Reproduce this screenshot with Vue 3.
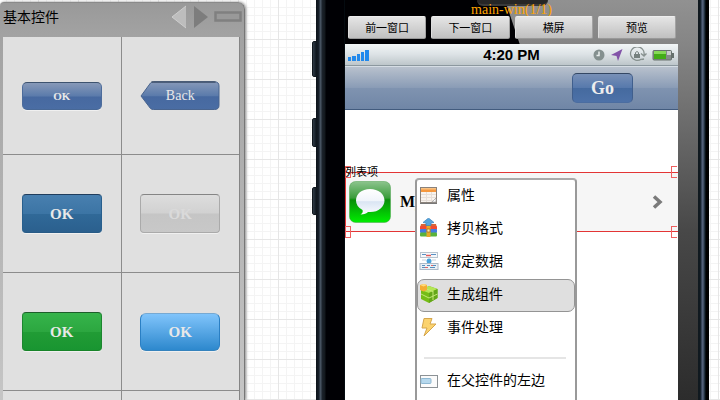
<script setup>
import { ref } from 'vue'

const tiles = [
  { label: 'OK', kind: 'navy' },
  { label: 'Back', kind: 'back' },
  { label: 'OK', kind: 'steel' },
  { label: 'OK', kind: 'muted' },
  { label: 'OK', kind: 'green' },
  { label: 'OK', kind: 'sky' },
  { label: '', kind: '' },
  { label: '', kind: '' }
]
const tools = ['前一窗口', '下一窗口', '横屏', '预览']
const menu = [
  { label: '属性', icon: 'sheet' },
  { label: '拷贝格式', icon: 'copy' },
  { label: '绑定数据', icon: 'bind' },
  { label: '生成组件', icon: 'cube' },
  { label: '事件处理', icon: 'bolt' },
  { label: '在父控件的左边', icon: 'left', split: true }
]
const active = ref('生成组件')
</script>

<template>
  <div class="workspace">
    <aside class="palette">
      <header class="palette-head">
        <h2>基本控件</h2>
        <button class="plain" aria-label="上一页">
          <svg width="16" height="24" viewBox="0 0 16 24"><path d="M1 12 15 1V23Z" fill="#bdbdbd" /><path d="M15 1 1 12 15 23" fill="none" stroke="#cecece" /></svg>
        </button>
        <button class="plain next" aria-label="下一页">
          <svg width="16" height="24" viewBox="0 0 16 24"><path d="M15 12 1 1V23Z" fill="#7d7d7d" /></svg>
        </button>
        <button class="plain" aria-label="折叠">
          <svg width="28" height="24" viewBox="0 0 28 24"><rect x="1.500" y="7.500" width="25" height="8" fill="#999" stroke="#808080" stroke-width="2.500" /></svg>
        </button>
      </header>
      <div class="tiles">
        <div v-for="(tile, i) in tiles" :key="i" class="tile">
          <button v-if="tile.kind" class="sample" :class="tile.kind">
            <svg v-if="tile.kind === 'back'" class="arrow" width="80" height="30" viewBox="0 0 79 30">
              <defs>
                <linearGradient id="arrowFill" x2="0" y2="1">
                  <stop offset="0" stop-color="#8799b9" /><stop offset=".5" stop-color="#5b7bab" />
                  <stop offset=".54" stop-color="#4769a0" /><stop offset="1" stop-color="#4a6da4" />
                </linearGradient>
              </defs>
              <path d="M.5 15 10 2Q11 .8 13 .8H74Q78.500.8 78.500 5V24.500Q78.500 28.500 74 28.500H13Q11 28.500 10 27.500Z" fill="url(#arrowFill)" stroke="#49648e" />
              <path d="M11 1H75" stroke="#26344a" />
            </svg>
            <span>{{ tile.label }}</span>
          </button>
        </div>
      </div>
    </aside>

    <main class="stage">
      <div class="phone">
        <i class="side-key mute"></i>
        <i class="side-key up"></i>
        <i class="side-key down"></i>
        <i class="speaker"></i>
        <div class="title">main-win(1/1)</div>
        <div class="tools">
          <button v-for="t in tools" :key="t">{{ t }}</button>
        </div>

        <div class="screen">
          <div class="status">
            <svg width="21" height="12" viewBox="0 0 21 12" fill="#2189ec"><path d="M0 8h3v4H0zM4 7h4v5H4zM9 5h3v7H9zM13 3h3v9h-3zM17 1h4v11h-4z" /></svg>
            <time>4:20 PM</time>
            <svg class="status-icons" width="82" height="16" viewBox="0 0 82 16">
              <circle cx="6" cy="8" r="5.500" fill="#84908f" /><path d="M6 4.500V8.500H3.500" fill="none" stroke="#e8eded" stroke-width="1.500" />
              <path d="M29.500 2 18 8l5.500 1L25 14Z" fill="#8253a8" />
              <path d="M48.500 12A6.800 6.800 0 1 1 51 8M48 6.500 51 9l2.500-2.500M48.500 12.500 51 12" fill="none" stroke="#87918f" stroke-width="1.300" />
              <rect x="41" y="7" width="6" height="4" fill="#75807e" /><path d="M42.500 7V5.500q1.500-2 3 0V7" fill="none" stroke="#75807e" />
              <rect x="60" y="3.500" width="18.500" height="9.500" rx="1" fill="#858a89" stroke="#66706c" />
              <path d="M79 6h2v5h-2z" fill="#66706c" /><path d="M61 4h12v8H61z" fill="#43ac16" /><path d="M61 4h12v3H61z" fill="#86d957" /><path d="M74 4h4v4h-4z" fill="#c9cdcc" />
            </svg>
          </div>
          <nav class="navbar"><button class="go">Go</button></nav>
          <section class="row">
            <span class="row-tag">列表项</span>
            <i class="handle tl"></i><i class="handle tr"></i><i class="handle bl"></i><i class="handle br"></i>
            <svg width="42" height="42" viewBox="0 0 42 42">
              <defs>
                <linearGradient id="msg" x2="0" y2="1"><stop offset="0" stop-color="#8cc48d" /><stop offset=".4" stop-color="#3a9c3c" /><stop offset=".45" stop-color="#078e09" /><stop offset="1" stop-color="#00ee00" /></linearGradient>
                <linearGradient id="bubble" x2="0" y2="1"><stop offset="0" stop-color="#fff" /><stop offset=".45" stop-color="#f1f5fb" /><stop offset=".5" stop-color="#dae5f3" /><stop offset="1" stop-color="#fafcff" /></linearGradient>
              </defs>
              <rect x=".5" y=".5" width="41" height="41" rx="6" fill="url(#msg)" stroke="#4aa04c" stroke-opacity=".5" />
              <path d="M21 8C12.500 8 7 13 7 19.500q0 6 6.500 9.500Q14.500 31.500 11.500 33.500 17 33 19 31C29 32 35.500 26 35.500 19.500S29.500 8 21 8Z" fill="url(#bubble)" />
            </svg>
            <strong>My</strong>
            <svg class="chevron" width="12" height="14" viewBox="0 0 12 14"><path d="M2 1.500 8 7 2 12.500" fill="none" stroke="#7b7b7b" stroke-width="3.500" /></svg>

            <div class="menu" role="menu">
              <template v-for="m in menu" :key="m.label">
                <hr v-if="m.split" />
                <button role="menuitem" :class="{ active: active === m.label }" @click="active = m.label">
                  <svg width="20" height="20" viewBox="0 0 20 20">
                    <g v-if="m.icon === 'sheet'">
                      <rect x="1.500" y="2.500" width="16" height="15" fill="#f8f3ee" stroke="#8b827b" /><path d="M2 3h15v4H2z" fill="#f5983f" /><path d="M2 3h15v1.500H2z" fill="#fac283" />
                      <path d="M2 9.500h15M2 12.500h15M2 15.500h12M7.500 7v10M12.500 7v10" stroke="#e6ded8" /><path d="m13 17 4-4v4Z" fill="#fff" stroke="#999" stroke-width=".7" /><path d="M1 18.500h17" stroke="#777" />
                    </g>
                    <g v-else-if="m.icon === 'copy'">
                      <path d="M2 6h15l1 4H1Z" fill="#d96537" /><rect x="1" y="8" width="17" height="4" rx="1" fill="#f14b32" /><rect x="1" y="11" width="17" height="4" rx="1" fill="#427ce1" /><rect x="1" y="14.500" width="17" height="4" rx="1" fill="#5ab33b" />
                      <path d="M7.500 7h4v12h-4z" fill="#e7a929" /><path d="M8 11h3v3H8z" fill="#faeaac" stroke="#a46812" stroke-width=".7" /><path d="M9.500 0 15 4.500 12 5v2.500H7V5L4 4.500Z" fill="#56a5dc" stroke="#3b82bc" stroke-width=".7" />
                    </g>
                    <g v-else-if="m.icon === 'bind'">
                      <rect x="1.500" y="1.500" width="17" height="5" fill="#f5f8fb" stroke="#b9c4ce" /><path d="M3 3.500h4m5 0h5" stroke="#5c90c3" /><path d="M7 4.500h5" stroke="#e35b5b" stroke-width="1.500" />
                      <circle cx="10" cy="10" r="2.500" fill="#4ba4dc" /><path d="M3 9h4m6 0h4" stroke="#c5d1dc" />
                      <rect x="1" y="12.500" width="18" height="6" fill="#eaf0f5" stroke="#acbac8" /><path d="M3 14.500h3m2 0h3m2 0h4M3 16.500h3m5 0h5" stroke="#568ebd" /><path d="M6 16.500h3m3-2h2" stroke="#e16565" />
                    </g>
                    <g v-else-if="m.icon === 'cube'">
                      <path d="m10 2 8.500 3v9L10 19l-8-4V6Z" fill="#75bd16" /><path d="m2 6 8 3 8.500-4L10 2Z" fill="#b4e655" /><path d="M10 9v10l8.500-5V5Z" fill="#64a719" />
                      <path d="M2 10l8 4 8.500-4M14 7v9M6 4.500l8 3" stroke="#c4e876" fill="none" /><path d="m1 1 4-1 3 1v5L4.500 7.500 1 6Z" fill="#f5ad32" /><path d="m1 1 3.500 1.500L8 1 5 0Z" fill="#ffdc78" />
                    </g>
                    <path v-else-if="m.icon === 'bolt'" d="M5 1.500h8L11 7h6L5 19l3-8H3Z" fill="#fbd36f" stroke="#d5a64d" />
                    <g v-else>
                      <rect x="1.500" y="5.500" width="17" height="12" fill="#fbfbfb" stroke="#8c9296" /><rect x="2" y="8.500" width="10" height="5" rx="1" fill="#b6d8ed" stroke="#8fb9d3" />
                    </g>
                  </svg>
                  <span>{{ m.label }}</span>
                </button>
              </template>
            </div>
          </section>
        </div>
      </div>
    </main>
  </div>
</template>

<style>
body { margin: 0; }
</style>

<style scoped>
* { box-sizing: border-box; }
button { font: inherit; color: inherit; margin: 0; padding: 0; cursor: pointer; }
svg { display: block; flex: none; }
.workspace {
  display: flex;
  height: 100vh;
  overflow: hidden;
  font-family: "Liberation Sans", "Noto Sans CJK SC", sans-serif;
  color: #000;
  background-color: #fff;
  background-image:
    linear-gradient(#e6e6e6 1px, transparent 1px),
    linear-gradient(90deg, #e6e6e6 1px, transparent 1px),
    linear-gradient(#f4f4f4 1px, transparent 1px),
    linear-gradient(90deg, #f4f4f4 1px, transparent 1px);
  background-size: 40px 40px, 40px 40px, 8px 8px, 8px 8px;
  background-position: 38px 39px, 38px 39px, 6px 7px, 6px 7px;
}
.palette {
  flex: 0 0 245px;
  margin-top: 2px;
  padding: 0 4px 0 3px;
  background: linear-gradient(#999 0, #a2a2a2 30px, #c6c6c6 400px);
  border-right: 1px solid #777;
  border-top: 1px solid #8a8a8a;
  border-radius: 4px 7px 0 0;
  box-shadow: 1px 0 3px #888;
}
.palette-head { display: flex; align-items: center; height: 34px; margin-right: -2px; padding-bottom: 6px; }
h2 { flex: 1; margin: 0; font-size: 14px; font-weight: 400; line-height: 20px; }
.plain { background: none; border: 0; }
.next { margin: 0 5px 0 6px; }
.tiles {
  display: grid;
  grid-template-columns: 1fr 1fr;
  grid-auto-rows: 117px;
  gap: 1px;
  background: #8c8c8c;
  border-right: 1px solid #858585;
}
.tile { display: grid; place-items: center; background: #e0e0e0; }
.sample {
  display: grid;
  place-items: center;
  width: 80px;
  height: 39px;
  border: 1px solid;
  border-radius: 4px;
  color: #e8e8e8;
  font: bold 15px/20px "Liberation Serif", serif;
  box-shadow: 0 1px 0 #f0f0f0;
}
.navy { height: 28px; font-size: 11px; border-radius: 5px; border-color: #3d536f #4d6c9b #486896; background: linear-gradient(#8799b8, #5b7bab 50%, #4769a0 54%, #4a6da4); }
.back { height: 30px; border: 0; background: none; box-shadow: none; font-size: 14px; font-weight: 400; }
.back > * { grid-area: 1 / 1; }
.back span { z-index: 1; }
.steel { border-color: #203d5d #285f8d #285b86; background: linear-gradient(#487faf, #3c75a5 50%, #306998 52%, #2b608e); }
.muted { color: #dadada; border-color: #858585 #aaa #aaa; background: linear-gradient(#ddd, #d1d1d1 49%, #c5c5c5 51%, #c8c8c8); }
.green { border-color: #1d5e2a #1c862f #188429; background: linear-gradient(#36b44b, #2ca740 50%, #219c35 52%, #199531); }
.sky { height: 38px; border-radius: 6px; border-color: #77a9d2 #2a7fc4 #3583bd; background: linear-gradient(#80c4fb, #2d88cd); }

.stage { flex: 1; min-width: 0; padding: 0 11px 0 71px; }
.phone {
  position: relative;
  min-height: 100vh;
  padding: 0 31px 0 29px;
  background:
    linear-gradient(90deg, #0b1118 0, #17202b 3px, #465260 4px, #465260 5px, #1c232c 6px, #12171c 9px, #000004 10px, #000004 28px, #08151b 29px) left / 29px 100% no-repeat,
    #000003;
}
.phone::before {
  content: "";
  position: absolute;
  inset: 0 8px 0 189px;
  background: linear-gradient(#919191 0, #858585 45px, #707070 110px, #484848 230px, #2c2c2c 400px);
  clip-path: polygon(0 0, 15px 45px, 15px 100%, 100% 100%, 100% 0);
}
.phone::after {
  content: "";
  position: absolute;
  inset: 0 0 0 auto;
  width: 11px;
  background: linear-gradient(90deg, #10191f 2px, #1b2938 3px, #526078 4px, #526078 5px, #11202b 7px, #000 8px);
}
.side-key { position: absolute; left: -4px; width: 5px; background: linear-gradient(90deg, #303b46, #111922); border: 1px solid #10171d; border-radius: 2px 0 0 2px; }
.mute { top: 41px; height: 36px; }
.up { top: 118px; height: 29px; }
.down { top: 187px; height: 28px; }
.speaker { position: absolute; top: 0; left: 161px; width: 71px; height: 6px; background: #262626; border-bottom: 2px solid #3a3a3a; border-radius: 0 0 7px 7px; }
.title { position: relative; height: 16px; color: #ffa500; font: 14px/20px "Liberation Serif", serif; text-align: center; }
.tools { position: relative; display: grid; grid-template-columns: repeat(4, 1fr); gap: 5px; padding: 0 2px 0 3px; }
.tools button {
  height: 23px;
  border: 1px solid;
  border-color: #eee #a3a3a3 #999 #ddd;
  border-radius: 2px;
  background: linear-gradient(#e5e5e5, #c0c0c0);
  font-size: 11px;
  line-height: 20px;
}
.screen { position: relative; min-height: calc(100vh - 44px); margin-top: 5px; background: #fff; }
.status { display: grid; grid-template-columns: 1fr auto 1fr; align-items: center; height: 22px; padding: 0 3px; background: linear-gradient(#f2f6f7, #dce2e5 50%, #bdc6ca); border-bottom: 1px solid #8c989f; }
.status time { font-size: 15px; font-weight: 700; line-height: 20px; }
.status-icons { justify-self: end; }
.navbar { display: flex; align-items: center; justify-content: flex-end; height: 44px; padding-right: 45px; background: linear-gradient(#b8c1cd, #8a9cb6 49%, #7f93b0 51%, #7086a6); border-top: 1px solid #d5dde4; border-bottom: 1px solid #425b7e; }
.go { width: 61px; height: 30px; border: 1px solid; border-color: #344764 #405f8d #4b6da0; border-radius: 5px; color: #eee; background: linear-gradient(#7890b7, #5779ac 49%, #456a9f 51%, #4d71a8); font: bold 18px/26px "Liberation Serif", serif; }
.row { position: relative; display: flex; align-items: center; gap: 9px; height: 60px; margin-top: 62px; padding: 0 14px 0 3px; background: #f6f6f6; border: 1px solid #e33535; border-right: 0; }
.row strong { flex: 1; font: bold 16px/24px "Liberation Serif", serif; }
.row-tag { position: absolute; left: -1px; top: -9px; font-size: 11px; line-height: 16px; z-index: 1; }
.handle { position: absolute; width: 6px; height: 12px; border: 1px solid #f06060; }
.tl { left: -1px; top: -7px; }
.tr { right: 1px; top: -7px; border-right: 0; }
.bl { left: -1px; bottom: -7px; }
.br { right: 1px; bottom: -7px; border-right: 0; }
.menu { position: absolute; top: 5px; left: 69px; width: 162px; min-height: 240px; padding: 0; background: #fff; border: 2px solid #999; border-top-color: #aaa; border-radius: 4px; z-index: 2; }
.menu button { display: flex; align-items: center; gap: 8px; width: 100%; height: 33px; padding: 0 0 3px 1px; border: 1px solid transparent; border-radius: 7px; background: none; font-size: 14px; line-height: 20px; text-align: left; }
.menu .active { background: #dfdfdf; border-color: #949494; }
hr { height: 2px; margin: 12px 9px 6px 7px; border: 0; background: #e5e5e5; }
</style>
